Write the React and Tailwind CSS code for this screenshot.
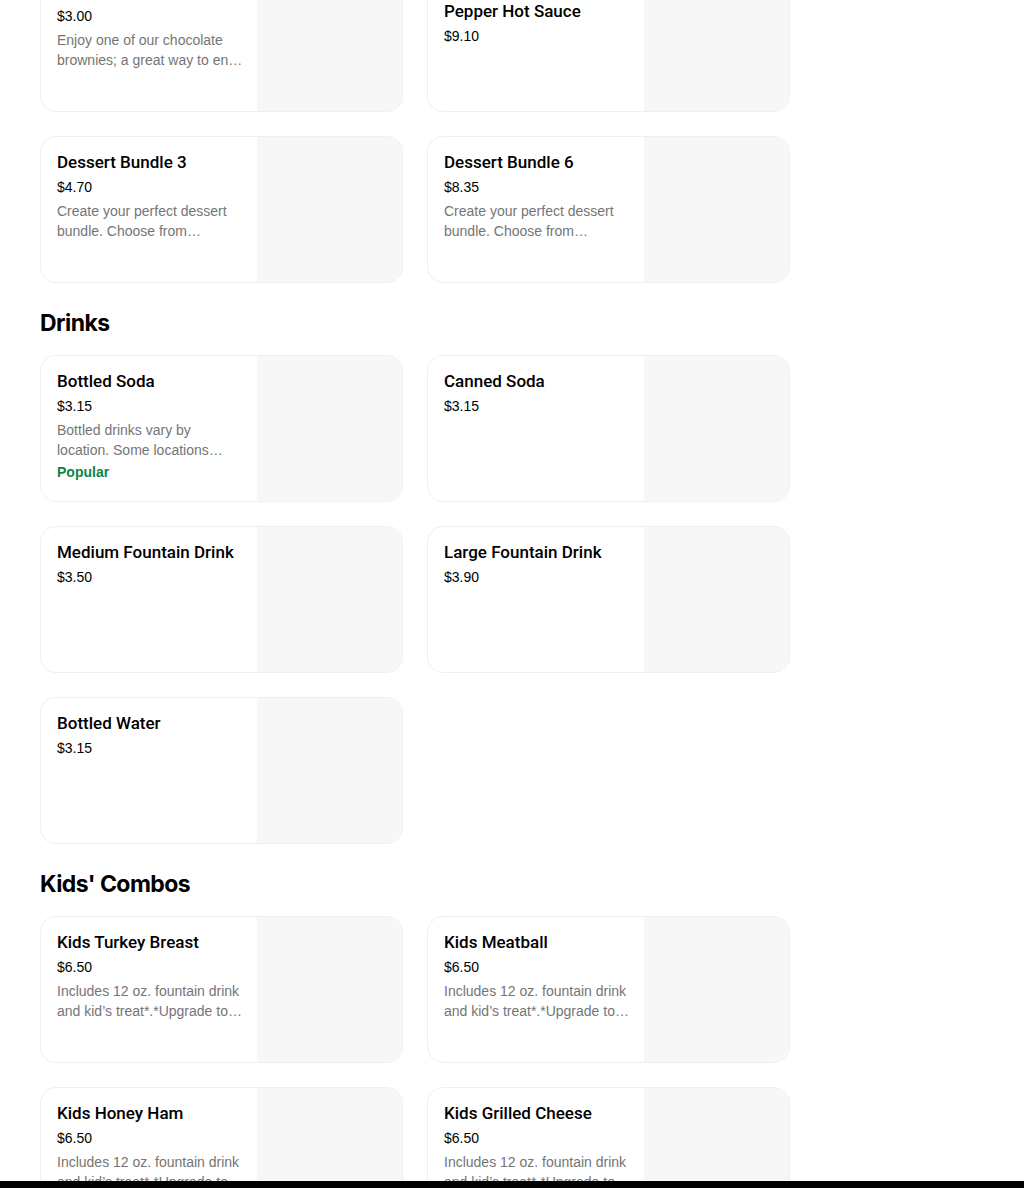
const KIDS_DESC =
  "Includes 12 oz. fountain drink and kid’s treat*.*Upgrade to a bottled drink for an additional charge.";
const BUNDLE_DESC = "Create your perfect dessert bundle. Choose from…";

const SECTIONS = [
  {
    title: null,
    items: [
      { name: "Brownie", price: "$3.00", desc: "Enjoy one of our chocolate brownies; a great way to end your meal." },
      { name: "TABASCO® Chipotle Pepper Hot Sauce", price: "$9.10" },
      { name: "Dessert Bundle 3", price: "$4.70", desc: BUNDLE_DESC },
      { name: "Dessert Bundle 6", price: "$8.35", desc: BUNDLE_DESC },
    ],
  },
  {
    title: "Drinks",
    items: [
      {
        name: "Bottled Soda",
        price: "$3.15",
        desc: "Bottled drinks vary by location. Some locations…",
        popular: true,
      },
      { name: "Canned Soda", price: "$3.15" },
      { name: "Medium Fountain Drink", price: "$3.50" },
      { name: "Large Fountain Drink", price: "$3.90" },
      { name: "Bottled Water", price: "$3.15" },
    ],
  },
  {
    title: "Kids' Combos",
    items: [
      { name: "Kids Turkey Breast", price: "$6.50", desc: KIDS_DESC },
      { name: "Kids Meatball", price: "$6.50", desc: KIDS_DESC },
      { name: "Kids Honey Ham", price: "$6.50", desc: KIDS_DESC },
      { name: "Kids Grilled Cheese", price: "$6.50", desc: KIDS_DESC },
    ],
  },
];

function ItemCard({ item }) {
  return (
    <div className="flex h-[147px] overflow-hidden rounded-2xl border border-[#efefef] bg-white">
      <div className="w-[216px] shrink-0 pl-4 pr-3 pt-[15px]">
        <div className="font-['Roboto',sans-serif] text-[17px] font-medium leading-5 text-black">
          {item.name}
        </div>
        <div className="mt-[5px] text-[14px] leading-5 text-black">{item.price}</div>
        {item.desc && (
          <div className="mt-1 line-clamp-2 text-[14px] leading-5 text-[#757575]">{item.desc}</div>
        )}
        {item.popular && (
          <div className="mt-[2px] text-[14px] font-bold leading-5 text-[#0e8345]">Popular</div>
        )}
      </div>
      <div className="flex-1 bg-[#f7f7f7]" />
    </div>
  );
}

export default function App() {
  return (
    <div className="h-[1188px] overflow-hidden bg-white font-['Liberation_Sans',Arial,sans-serif]">
      <div className="-mt-[35px] ml-10 w-[750px]">
        {SECTIONS.map((section, index) => (
          <section key={index} className={index > 0 ? "mt-6" : ""}>
            {section.title && (
              <h2 className="mb-4 font-['Inter',sans-serif] text-[23px] font-bold leading-8 tracking-tight text-black">
                {section.title}
              </h2>
            )}
            <div className="grid grid-cols-2 gap-6">
              {section.items.map((item) => (
                <ItemCard key={item.name} item={item} />
              ))}
            </div>
          </section>
        ))}
      </div>
      <div className="fixed bottom-0 left-0 right-0 h-[7px] bg-black" />
    </div>
  );
}
